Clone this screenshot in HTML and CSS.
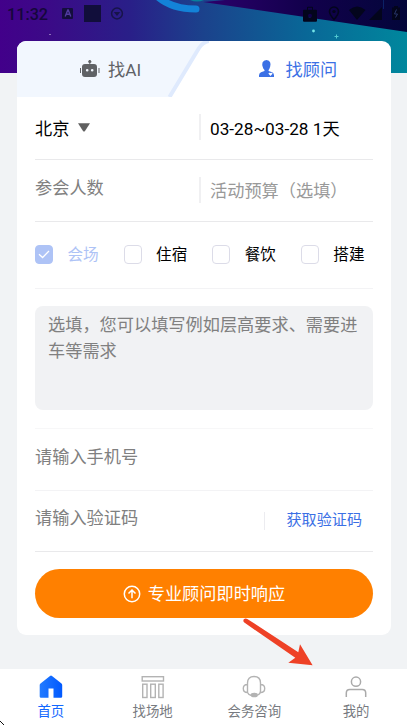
FILE: index.html
```html
<!DOCTYPE html>
<html lang="zh-CN">
<head>
<meta charset="utf-8">
<meta name="viewport" content="width=device-width, initial-scale=1">
<title>找顾问</title>
<link rel="stylesheet" href="styles.css">
</head>
<body>
<div class="app">
  <header class="hero">
    <svg class="hero-art" viewBox="0 0 407 73" preserveAspectRatio="none" aria-hidden="true">
      <defs>
        <linearGradient id="sky" x1="0" y1="0" x2="1" y2="0">
          <stop offset="0" stop-color="#42008a"/><stop offset=".12" stop-color="#3b0a87"/><stop offset=".32" stop-color="#291f88"/><stop offset=".5" stop-color="#1b428c"/><stop offset=".75" stop-color="#096797"/><stop offset="1" stop-color="#00879d"/>
        </linearGradient>
        <linearGradient id="night" x1="0" y1="0" x2="1" y2="0">
          <stop offset="0" stop-color="#2c006c"/><stop offset=".5" stop-color="#12004c"/><stop offset="1" stop-color="#03063a"/>
        </linearGradient>
      </defs>
      <rect width="407" height="73" fill="url(#sky)"/>
      <path d="M203 2L225 0H407V32Z" fill="url(#night)"/>
      <path d="M190 0Q197 3 204 0Z" fill="#087f9c"/>
      <path d="M158 -3Q172 9 196 9" fill="none" stroke="#1382d8" stroke-width="7" stroke-linecap="round"/>
      <path d="M383.500 0V9" stroke="#0b2265"/>
      <circle cx="313.500" cy="31" r="1.400" fill="#73e4e7"/>
      <path d="M334.500 36.500h4M336.500 34.500v4" stroke="#51c8d0"/>
      <path d="M49 34.500h2" stroke="#8c70ba"/>
    </svg>
    <div class="status">
      <span class="clock">11:32</span>
      <svg class="status-left" width="64" height="20" viewBox="0 0 64 20" aria-hidden="true">
        <rect x="1" y="4" width="11" height="11" rx="1" fill="#140e3d"/><path d="M4.200 12.500L6.800 6h.4l2.600 6.500M5.200 10.300h3.600" fill="none" stroke="#513aa0" stroke-width="1.400"/>
        <rect x="23" y="1" width="17" height="17" fill="#110e3b"/>
        <circle cx="56" cy="9.500" r="5.400" fill="none" stroke="#171449" stroke-width="1.500"/><path d="M52.800 8h6.400L56 12z" fill="#171449"/>
      </svg>
      <svg class="status-right" width="98" height="20" viewBox="0 0 98 20" aria-hidden="true">
        <g fill="#03051c"><path transform="translate(0 .7)" fill-rule="evenodd" d="M2 5h3V3q0-1 1-1h4q1 0 1 1v2h3q1 0 1 1v10q0 1-1 1H2q-1 0-1-1V6q0-1 1-1zm4 0h4V3H6zm2 4a2 2 0 1 0 0 4 2 2 0 0 0 0-4z"/>
        <path d="M47 6Q55-1 63.500 6L55 16z"/><path d="M80 3v13H67z"/><path d="M90 3.500h2V2h4v1.500h2V16h-8z"/></g>
        <path d="M32 15.500q-4.500-5-4.500-8a4.500 4.500 0 0 1 9 0q0 3-4.500 8z" fill="none" stroke="#03051c" stroke-width="1.500"/><circle cx="32" cy="7.500" r="1.600" fill="#03051c"/>
        <path d="M94.500 5.500L92.500 10h3L93.500 13.500" fill="none" stroke="#29376b"/>
      </svg>
    </div>
  </header>

  <main class="card">
    <div class="tabs">
      <svg class="tab-shape" viewBox="0 0 192 56" aria-hidden="true"><path d="M0 0H192Q186 1 182 7L153 56H0Z" fill="#f2f7fe"/><path d="M192 0Q186 1 182 7L152.500 56" fill="none" stroke="#dfeafd" stroke-width="4"/></svg>
      <div class="tab tab-ai">
        <svg width="20" height="18" viewBox="0 0 20 18" aria-hidden="true"><path fill="#606266" fill-rule="evenodd" d="M9.300 3a1.500 1.500 0 1 1 1 0v1H14q3 0 3 3v7q0 3-3 3H5q-3 0-3-3V7q0-3 3-3h4.300zM7.200 9a1.300 1.300 0 1 0 0 2.600 1.300 1.300 0 0 0 0-2.600zm5 0a1.300 1.300 0 1 0 0 2.600 1.300 1.300 0 0 0 0-2.600zM0 8h1v5H0zM18.500 8h1v5h-1z"/></svg>
        <span>找AI</span>
      </div>
      <div class="tab tab-advisor">
        <svg width="16" height="18" viewBox="0 0 16 18" aria-hidden="true"><path fill="#3b70e5" d="M3.500 2.500Q4.500 0 7.500 0t3.700 2.500q.6 1.500 0 4Q10.500 9 9.600 10v1l3.600 1.200Q15 13 15 15.500V17H0v-1.500Q0 13 2 12.200L5.500 11v-1Q4 8.500 3.600 6.500q-.6-2-.1-4z"/><path fill="#fff" d="M11.500 16L9.500 13.800q0-1.800 2-.8 2-1 2 .8z"/></svg>
        <span>找顾问</span>
      </div>
    </div>

    <div class="form">
      <div class="row row-split row-first">
        <div class="cell">北京<svg class="caret" width="12" height="9" viewBox="0 0 12 9" aria-hidden="true"><path d="M0 .300h12L7 7.900q-1 1-2 0z" fill="#606060"/></svg></div>
        <div class="cell cell-right">03-28~03-28 1天</div>
      </div>
      <div class="row row-split row-second">
        <div class="cell hint">参会人数</div>
        <div class="cell cell-right hint-light">活动预算（选填）</div>
      </div>
      <div class="row checks">
        <label class="check checked"><span class="box"><svg width="12" height="9" viewBox="0 0 12 9" aria-hidden="true"><path d="M1 4.200l3.600 3.300L11 1" fill="none" stroke="#fff" stroke-width="1.300"/></svg></span><span class="check-text">会场</span></label>
        <label class="check"><span class="box"></span><span class="check-text">住宿</span></label>
        <label class="check"><span class="box"></span><span class="check-text">餐饮</span></label>
        <label class="check"><span class="box"></span><span class="check-text">搭建</span></label>
      </div>
      <div class="note">选填，您可以填写例如层高要求、需要进车等需求</div>
      <div class="row phone hint">请输入手机号</div>
      <div class="row code hint"><span>请输入验证码</span><span class="get-code">获取验证码</span></div>
      <div class="submit">
        <svg width="18" height="18" viewBox="0 0 18 18" fill="none" stroke="#fff" stroke-width="1.500" aria-hidden="true"><circle cx="9" cy="9" r="7.700"/><path d="M9 13.300V5.200M5.500 8.500L9 5l3.500 3.500"/></svg>
        <span class="submit-text">专业顾问即时响应</span>
      </div>
    </div>
  </main>

  <nav class="nav">
    <div class="nav-item active">
      <svg width="24" height="24" viewBox="0 0 24 24" aria-hidden="true"><defs><linearGradient id="home"><stop stop-color="#237bff"/><stop offset="1" stop-color="#0059ff"/></linearGradient></defs><path fill="url(#home)" d="M11 .900q1-.7 2 0l9.500 7.600q.7.500.7 1.500v11.500q0 1.300-1.300 1.300H14.500V13.500h-5v9.300H2q-1.300 0-1.300-1.300V10q0-1 .8-1.500z"/></svg>
      <span>首页</span>
    </div>
    <div class="nav-item">
      <svg width="24" height="24" viewBox="0 0 24 24" fill="none" stroke="#b3b3b3" stroke-width="1.400" aria-hidden="true"><rect x="1.200" y="1.700" width="21.300" height="4.300"/><rect x="1.700" y="9.200" width="4.300" height="13.300"/><rect x="9.700" y="9.200" width="4.600" height="13.300"/><rect x="17.800" y="9.200" width="4.300" height="13.300"/></svg>
      <span>找场地</span>
    </div>
    <div class="nav-item">
      <svg width="24" height="24" viewBox="0 0 24 24" fill="none" stroke="#b3b3b3" stroke-width="1.400" aria-hidden="true"><path d="M5.500 17.500V8q0-6.500 6.500-6.500T18.500 8v8q0 2.500-2.500 4M5.500 9.500Q1.300 9.500 1.300 13.500t4.200 4M18.500 9.500q4.200 0 4.200 4t-4.200 4M5.500 17.500q1 2.500 4 3"/><ellipse cx="12.300" cy="20" rx="3" ry="1.600" fill="#b3b3b3" stroke="#b3b3b3"/></svg>
      <span>会务咨询</span>
    </div>
    <div class="nav-item">
      <svg width="24" height="24" viewBox="0 0 24 24" fill="none" stroke="#aaa" stroke-width="1.500" aria-hidden="true"><circle cx="12" cy="6.700" r="4.600"/><path d="M2.300 22v-4q0-3.500 3.500-3.500h12.400q3.500 0 3.500 3.500v4"/></svg>
      <span>我的</span>
    </div>
  </nav>
  <svg class="arrow" width="72" height="52" viewBox="0 0 72 52" aria-hidden="true"><path fill="#ee4126" d="M5.300 .900L56.300 34.200L58 26.300L70.600 47.200L46.300 44.700L53.300 39.700L2.300 4.600Q.700 3 1.800 1.300Q3.400-.200 5.300 .900Z"/></svg>
  <svg class="corner" width="5" height="5" viewBox="0 0 5 5" aria-hidden="true"><path d="M0 1h1v1H0zM1 2h1v1H1zM2 3h1v1H2zM3 4h1v1H3z" fill="#111"/></svg>
</div>
</body>
</html>
```
FILE: styles.css
```css
* { box-sizing: border-box; }

body {
  margin: 0;
  font-family: Roboto, "Noto Sans CJK SC", sans-serif;
  font-size: 17.2px;
  color: #000;
  background: #f1f3f5;
}

svg { display: block; flex: none; }

.app {
  position: relative;
  display: flex;
  flex-direction: column;
  height: 725px;
  overflow: hidden;
}

.hero {
  position: relative;
  flex: none;
  height: 73px;
}

.hero-art {
  position: absolute;
  inset: 0;
  width: 100%;
  height: 100%;
}

.status {
  position: relative;
  display: flex;
  align-items: center;
  height: 28px;
  padding: 0 7px;
}

.clock {
  width: 54px;
  font-size: 16.2px;
  font-weight: 500;
  color: #15073c;
}

.status-right { margin-left: auto; }

.card {
  position: relative;
  flex: none;
  height: 594px;
  margin: -32px 16px 0 17px;
  border-radius: 9px;
  background: #fff;
  overflow: hidden;
}

.tabs {
  position: relative;
  display: flex;
  height: 56px;
}

.tab-shape {
  position: absolute;
  top: 0;
  left: 0;
  width: 192px;
  height: 56px;
}

.tab {
  position: relative;
  display: flex;
  align-items: center;
  width: 50%;
  padding-bottom: 1px;
}

.tab-ai { padding-left: 63px; gap: 8px; color: #606266; }
.tab-advisor { padding-left: 55px; gap: 10.500px; color: #3b70e5; }

.form { padding: 0 18px; }

.row {
  display: flex;
  border-bottom: 1px solid #e9e9eb;
}

.row-split { align-items: center; padding-bottom: 2px; }
.row-first { height: 63px; }
.row-second { height: 62px; }

.cell {
  display: flex;
  align-items: center;
  width: 164px;
  height: 26px;
}

.row-second .cell:first-child { padding-bottom: 7px; }

.cell-right {
  flex: 1;
  padding-left: 9px;
  border-left: 2px solid #f0f0f2;
}

.caret { margin-left: 9px; }
.hint { color: #808080; }
.hint-light { color: #999; }

.checks {
  height: 67px;
  align-items: center;
  padding-bottom: 1px;
  border-color: #f3f3f5;
  font-size: 15.6px;
}

.check {
  display: flex;
  align-items: center;
  gap: 14.500px;
  flex: 0 0 88.600px;
  white-space: nowrap;
}

.check-text { margin-top: -3px; }

.box {
  display: flex;
  align-items: center;
  justify-content: center;
  width: 18px;
  height: 19px;
  border: 1px solid #dcdce8;
  border-radius: 4px;
}

.checked { color: #aec3f6; }
.checked .box { background: #aec3f6; border-color: #aec3f6; }

.note {
  height: 104px;
  margin-top: 17px;
  padding: 6px 13px;
  border-radius: 8px;
  background: #f1f2f4;
  color: #808080;
  line-height: 26px;
}

.phone {
  height: 63px;
  margin-top: 18px;
  align-items: center;
  padding-bottom: 9px;
  border-top: 1px solid #f7f7f8;
  border-bottom-color: #f3f3f5;
}

.code {
  height: 61px;
  align-items: center;
  justify-content: space-between;
  padding-bottom: 10px;
}

.get-code {
  height: 18px;
  margin: 9px 11px 0 0;
  padding-left: 22px;
  border-left: 1px solid #ececf0;
  font-size: 15.1px;
  line-height: 17px;
  color: #3b70e5;
}

.submit {
  display: flex;
  align-items: center;
  justify-content: center;
  gap: 7px;
  height: 49px;
  margin-top: 17px;
  border-radius: 25px;
  background: #ff8000;
  color: #fff;
}

.submit-text { margin-top: -3px; }

.nav {
  display: flex;
  height: 56px;
  margin-top: auto;
  background: #fff;
}

.nav-item {
  display: flex;
  flex: 1;
  flex-direction: column;
  align-items: center;
  padding-top: 6px;
  font-size: 13.4px;
  line-height: 26px;
  color: #777a80;
}

.active { color: #1268ff; }

.arrow {
  position: absolute;
  left: 242px;
  top: 618px;
}

.corner {
  position: absolute;
  left: 0;
  bottom: 0;
}
```
